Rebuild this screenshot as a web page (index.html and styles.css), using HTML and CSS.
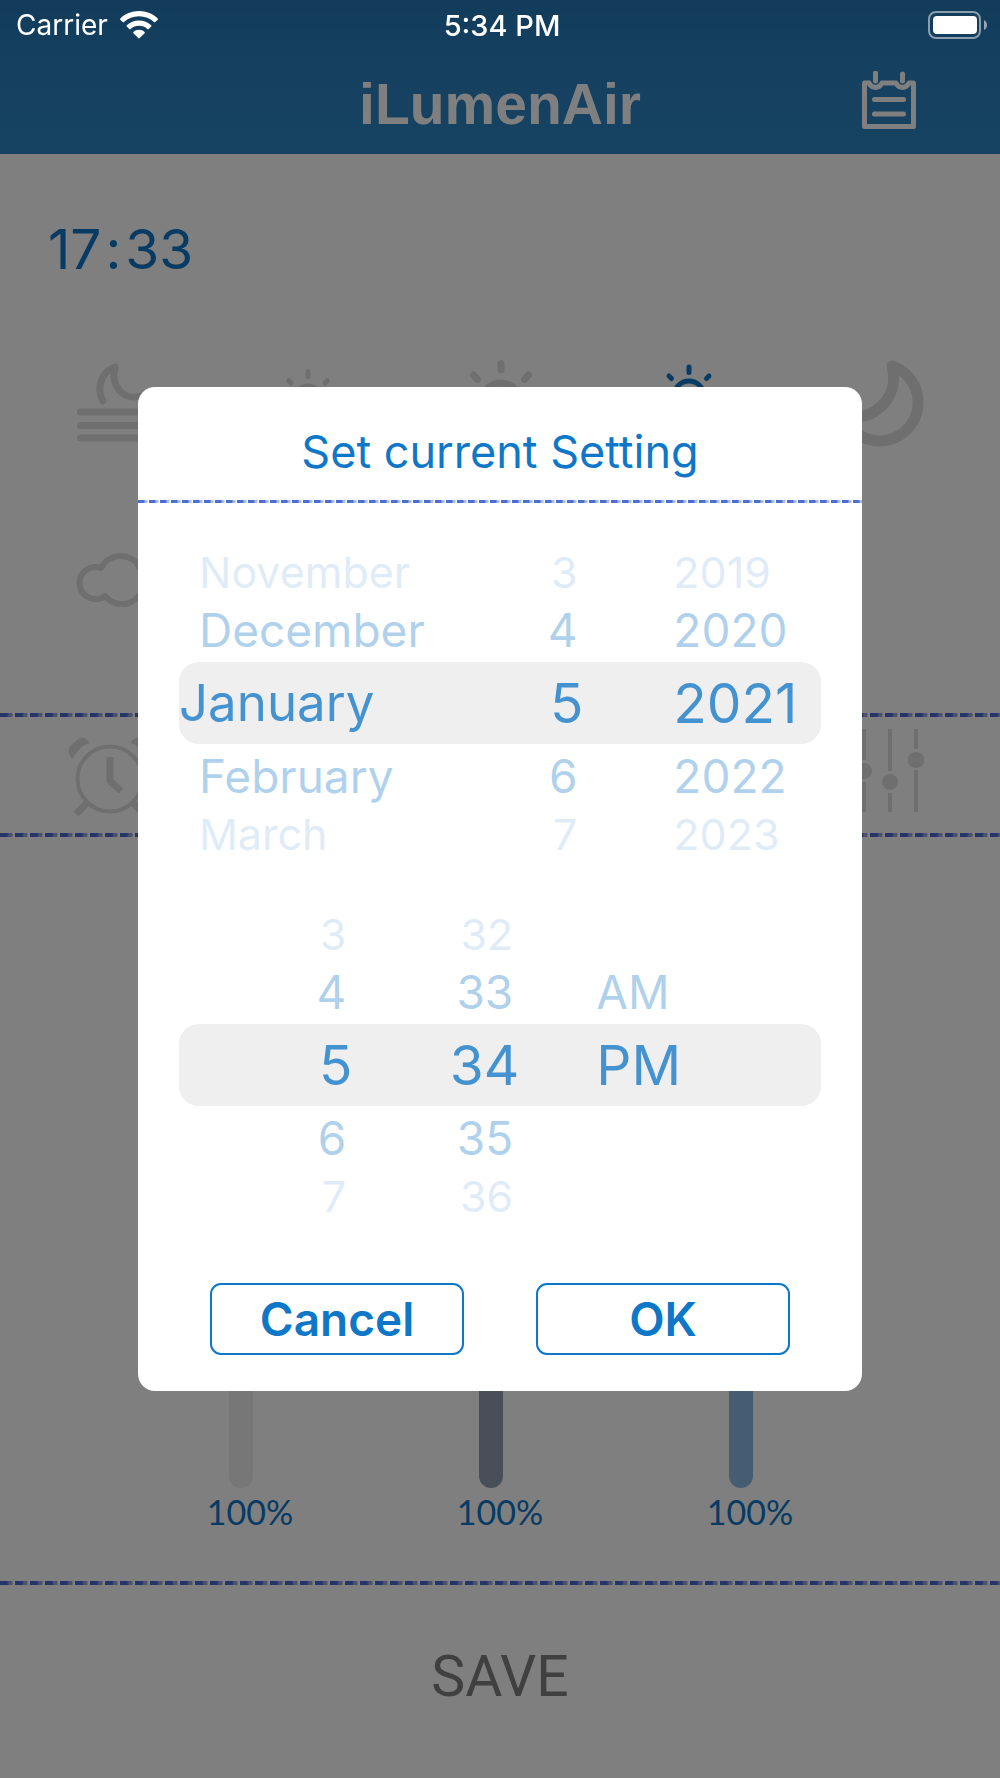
FILE: index.html
```html
<!doctype html>
<html lang="en">
<head>
  <meta charset="utf-8">
  <meta name="viewport" content="width=device-width, initial-scale=1">
  <title>iLumenAir</title>
  <link rel="stylesheet" href="styles.css">
</head>
<body>

  <div class="app">
    <header class="header">
      <div class="status-bar">
        <div class="carrier">
          <span>Carrier</span>
          <svg width="38" height="28" viewBox="0 0 38 28" fill="#fff" aria-hidden="true">
            <path d="M19 0C11.600 0 5 2.800 .3 7.400c-.4.400-.4.900 0 1.300l2.400 2.400c.4.400.9.400 1.300 0C8 7.400 13.200 5.300 19 5.300s11 2.100 15 5.800c.4.400.9.400 1.300 0l2.400-2.400c.4-.4.400-.9 0-1.300C33 2.800 26.400 0 19 0z"/>
            <path d="M19 9.400c-4.700 0-9 1.800-12.200 4.800-.4.400-.4.900 0 1.300l2.500 2.400c.4.400.9.400 1.300 0 2.200-2 5.200-3.200 8.400-3.200s6.200 1.200 8.400 3.200c.4.400.9.400 1.300 0l2.500-2.400c.4-.4.400-.9 0-1.300C28 11.200 23.700 9.400 19 9.400z"/>
            <path d="M19 18.800c-2.200 0-4.200.8-5.600 2.200-.4.400-.4.900 0 1.300l4.900 4.800c.4.400 1 .4 1.400 0l4.900-4.800c.4-.4.400-.9 0-1.300-1.400-1.400-3.400-2.200-5.600-2.200z"/>
          </svg>
        </div>
        <span class="clock">5:34 PM</span>
        <svg class="battery" width="60" height="28" viewBox="0 0 60 28" aria-hidden="true">
          <rect x="1" y="1" width="51" height="26" rx="7" fill="none" stroke="#fff" stroke-opacity=".5" stroke-width="2"/>
          <rect x="5" y="5" width="44" height="18" rx="4" fill="#fff"/>
          <path d="M56 9c4 2 4 8 0 10z" fill="#fff" fill-opacity=".55"/>
        </svg>
      </div>
      <div class="title-bar">
        <h1>iLumenAir</h1>
        <button type="button" class="log-button" aria-label="Schedule">
          <svg width="54" height="58" viewBox="0 0 54 58" fill="none" stroke="#fff" stroke-width="5" stroke-linecap="round" stroke-linejoin="round">
            <path d="M7 12H2.500V55.500H51.500V12H47C44 18 37 18 34 12H20C17 18 10 18 7 12"/>
            <path d="M13.500 2v8M40.500 3v7M12.500 28.500H41.500M12.500 43H41.500"/>
          </svg>
        </button>
      </div>
    </header>

    <div class="device-time">17<span class="colon">:</span>33</div>

    <div class="icon-row">
      <svg class="icon" viewBox="0 0 100 100" stroke-width="7">
        <path d="M39 51C32 38 37 22 51 17C46 36 60 51 76 46"/>
        <path d="M16.500 62H88M16.500 75.500H88M16.500 88H88"/>
      </svg>
      <svg class="icon" viewBox="0 0 100 100" stroke-width="5">
        <circle cx="51" cy="51" r="15"/>
        <path d="M51 21.500V26.500M31.500 30.500L34 33M70.500 30.500L68 33"/>
      </svg>
      <svg class="icon" viewBox="0 0 100 100" stroke-width="7">
        <circle cx="51" cy="52" r="19"/>
        <path d="M51 13.500V20M23.500 25L27.500 29.500M78.500 25L74.500 29.500"/>
      </svg>
      <svg class="icon active" viewBox="0 0 100 100" stroke-width="5">
        <circle cx="46" cy="46" r="15"/>
        <path d="M46 17V22.500M26 26L28.500 28.500M66 26L63.500 28.500"/>
      </svg>
      <svg class="icon" viewBox="0 0 100 100" stroke-width="11">
        <path d="M56 16A38.500 38.500 0 1 1 8 67C40 72 64 46 56 16z"/>
      </svg>
    </div>

    <div class="icon-row">
      <svg class="icon" viewBox="0 0 100 100" stroke-width="6">
        <path d="M37 38A16 16 0 1 0 41 66C51 77 65 77 75 66A16 16 0 1 0 76 38C68 22 45 22 37 38"/>
      </svg>
    </div>

    <nav class="mode-row">
      <svg class="icon" viewBox="0 0 100 100" stroke-width="4">
        <circle cx="46" cy="54" r="32.500"/>
        <path class="solid" d="M8.500 34C3 28 4 23 7 20L14 14C17 12 22 12 25.500 18C18 20 12 27 8.500 34z"/>
        <path class="solid" d="M83.500 34C89 28 88 23 85 20L78 14C75 12 70 12 66.500 18C74 20 80 27 83.500 34z"/>
        <path class="thick" d="M46 32V56L57 66M23 78L12 89M69 78L80 89"/>
      </svg>
      <svg class="icon" viewBox="0 0 100 100" stroke-width="4">
        <g class="thin"><path d="M28 4V35M28 57V87M54 4V46M54 68V87M80 4V24M80 45V87"/></g>
        <circle class="solid" cx="28" cy="46" r="8"/>
        <circle class="solid" cx="54" cy="57" r="8"/>
        <circle class="solid" cx="80" cy="35" r="8"/>
      </svg>
    </nav>

    <div class="levels">
      <div class="level">
        <input type="range" id="level1" class="white" value="100">
        <label for="level1">100%</label>
      </div>
      <div class="level">
        <input type="range" id="level2" class="navy" value="100">
        <label for="level2">100%</label>
      </div>
      <div class="level">
        <input type="range" id="level3" class="blue" value="100">
        <label for="level3">100%</label>
      </div>
    </div>

    <button type="button" class="save">SAVE</button>
  </div>

  <div class="overlay">
    <form class="dialog" role="dialog" aria-labelledby="dialog-title">
      <h2 id="dialog-title">Set current Setting</h2>

      <div class="pickers">
        <div class="picker date">
          <ul class="wheel first month" aria-label="Month">
            <li>November</li>
            <li>December</li>
            <li>January</li>
            <li>February</li>
            <li>March</li>
          </ul>
          <ul class="wheel second right" aria-label="Day">
            <li>3</li>
            <li>4</li>
            <li>5</li>
            <li>6</li>
            <li>7</li>
          </ul>
          <ul class="wheel last" aria-label="Year">
            <li>2019</li>
            <li>2020</li>
            <li>2021</li>
            <li>2022</li>
            <li>2023</li>
          </ul>
        </div>

        <div class="picker time">
          <ul class="wheel first right" aria-label="Hour">
            <li>3</li>
            <li>4</li>
            <li>5</li>
            <li>6</li>
            <li>7</li>
          </ul>
          <ul class="wheel second right" aria-label="Minute">
            <li>32</li>
            <li>33</li>
            <li>34</li>
            <li>35</li>
            <li>36</li>
          </ul>
          <ul class="wheel last" aria-label="AM or PM">
            <li></li>
            <li>AM</li>
            <li>PM</li>
            <li></li>
            <li></li>
          </ul>
        </div>
      </div>

      <div class="actions">
        <button type="button">Cancel</button>
        <button type="submit">OK</button>
      </div>
    </form>
  </div>

</body>
</html>
```
FILE: styles.css
```css
* {
  box-sizing: border-box;
}
:root {
  --dash: repeating-linear-gradient(90deg, #4a6ad2 0 7px, #98a4d8 9px 12px, transparent 13px 15px);
  --dash-small: repeating-linear-gradient(90deg, #4a6fcc 0 6px, #a9bbe8 7px 9px, #fff 10px 11px);
}
body {
  margin: 0;
  font-family: Inter, "Liberation Sans", sans-serif;
  background: #fff;
}
button {
  font-family: inherit;
  background: none;
  border: none;
  padding: 0;
  cursor: pointer;
}
.app {
  display: flex;
  flex-direction: column;
  min-height: 100vh;
}

/* header */
.header {
  height: 154px;
  background: linear-gradient(#2478b4, #2c80c0 40%, #2e86c4);
}
.status-bar {
  position: relative;
  z-index: 3;
  display: grid;
  grid-template-columns: 1fr auto 1fr;
  align-items: center;
  height: 50px;
  padding: 0 12px 0 16px;
  color: #fff;
  font-size: 28px;
}
.carrier {
  display: flex;
  align-items: center;
  gap: 12px;
}
.clock {
  font-size: 29px;
  font-weight: 500;
}
.battery {
  justify-self: end;
}
.title-bar {
  display: grid;
  grid-template-columns: 1fr auto 1fr;
  align-items: center;
  height: 100px;
}
.title-bar h1 {
  grid-column: 2;
  margin: 0;
  padding-top: 8px;
  color: #fff;
  font-family: "Liberation Sans", sans-serif;
  font-size: 57px;
  line-height: 64px;
}
.log-button {
  justify-self: end;
  margin-right: 84px;
  height: 58px;
}

/* main screen */
.device-time {
  padding: 60px 48px 66px;
  color: #0f77c7;
  font-size: 55px;
  line-height: 70px;
}
.colon {
  margin: 0 4px;
}
.icon-row {
  display: grid;
  grid-template-columns: repeat(5, 1fr);
  justify-items: center;
  padding: 0 18px;
  margin-bottom: 80px;
}
.icon-row + .mode-row {
  margin-top: 3px;
}
.icon {
  width: 100px;
  height: 100px;
  fill: none;
  stroke: #dcdfdd;
  stroke-linecap: round;
  stroke-linejoin: round;
}
.icon.active {
  stroke: #0f77c7;
}
.icon .solid {
  fill: #dcdfdd;
  stroke: none;
}
.icon .thick {
  stroke-width: 7;
  stroke-linecap: butt;
  stroke-linejoin: miter;
}
.icon .thin {
  stroke-linecap: butt;
}
.mode-row {
  display: flex;
  justify-content: space-between;
  height: 124px;
  padding: 12px 64px;
  background:
    var(--dash) top / 100% 4px no-repeat,
    var(--dash) bottom / 100% 4px no-repeat;
}
.levels {
  flex: 1;
  display: grid;
  grid-template-columns: repeat(3, 1fr);
  align-items: end;
  padding: 0 12.5% 49px;
}
.level {
  display: flex;
  flex-direction: column;
  align-items: center;
}
.level input {
  appearance: none;
  writing-mode: vertical-lr;
  direction: rtl;
  width: 24px;
  height: 500px;
  margin: 0 18px 4px 0;
  border-radius: 12px;
}
.level input::-webkit-slider-thumb {
  appearance: none;
  width: 24px;
  height: 24px;
  border-radius: 12px;
  background: #fff;
}
.level .white {
  background: #eee;
}
.level .navy {
  background: #929eb2;
}
.level .blue {
  background: #8cbae2;
}
.level label {
  color: #0f77c7;
  font-family: Lato, sans-serif;
  font-size: 34px;
  line-height: 40px;
}
.save {
  height: 197px;
  padding-bottom: 6px;
  background: var(--dash) top / 100% 4px no-repeat;
  color: #808080;
  font-family: Roboto, sans-serif;
  font-size: 57px;
}

/* dialog */
.overlay {
  position: fixed;
  inset: 0;
  z-index: 2;
  display: flex;
  align-items: center;
  padding: 0 13.8%;
  background: rgba(0, 0, 0, 0.5);
}
.dialog {
  flex: 1;
  background: #fff;
  border-radius: 17px;
  color: #0f77c7;
}
.dialog h2 {
  margin: 0;
  font-size: 45px;
  font-weight: 400;
  line-height: 60px;
  text-align: center;
  padding: 35px 0 21px;
  background: var(--dash-small) bottom / 100% 3px no-repeat;
}
.pickers {
  display: flex;
  flex-direction: column;
  gap: 48px;
  padding: 43px 41px 61px;
}
.picker {
  display: grid;
}
/* band behind the selected row */
.picker::before {
  content: "";
  grid-area: 1 / 1 / 2 / -1;
  align-self: center;
  height: 82px;
  border-radius: 20px;
  background: #efefef;
}
.date {
  grid-template-columns: 47% 16% 14% 1fr;
}
.time {
  grid-template-columns: 27% 26% 12% 1fr;
}
.wheel {
  grid-row: 1;
  margin: 0;
  padding: 0;
  list-style: none;
}
.wheel.first {
  grid-column: 1;
}
.wheel.second {
  grid-column: 2;
}
.wheel.last {
  grid-column: 4;
}
.wheel.right {
  text-align: right;
}
.wheel li {
  height: 64px;
  line-height: 64px;
  font-size: 46px;
  opacity: 0.33;
}
.wheel li:first-child,
.wheel li:last-child {
  height: 52px;
  line-height: 52px;
  font-size: 43px;
  opacity: 0.13;
}
.wheel li:nth-child(3) {
  height: 82px;
  line-height: 82px;
  font-size: 55px;
  opacity: 0.76;
}
.right li:not(:nth-child(3)) {
  padding-right: 6px;
}
.month li:not(:nth-child(3)) {
  padding-left: 20px;
}
.wheel.month li:nth-child(3) {
  font-size: 51px;
}
.actions {
  display: flex;
  gap: 72px;
  padding: 0 72px 36px;
}
.actions button {
  flex: 1;
  height: 72px;
  border: 2px solid #0f77c7;
  border-radius: 11px;
  color: #0f77c7;
  font-size: 46px;
  font-weight: 600;
}
```
